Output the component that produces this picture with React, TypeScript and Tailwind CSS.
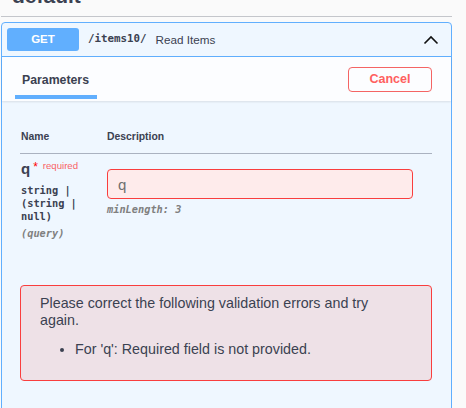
import React from 'react';

const sans = "font-['Liberation_Sans',Arial,sans-serif]";
const mono = "font-['DejaVu_Sans_Mono',monospace]";

export default function App() {
  return (
    <div className={`min-h-screen bg-[#fafafa] text-[#3b4151] ${sans}`}>
      <div className="ml-[1px] w-[451px]">
        {/* Tag heading, scrolled mostly out of view */}
        <div className="h-[17px] overflow-hidden border-b border-[#c4c6cb]">
          <h3 className="mt-[-16px] pl-[11px] text-[21px] font-bold leading-[24px]">default</h3>
        </div>

        {/* Operation block */}
        <div className="mt-[5px] min-h-[400px] rounded-[4px] border border-[#61affe] bg-[#eff7ff]">
          {/* Summary */}
          <div className="flex h-[34px] items-center border-b border-[#61affe] pl-[5px] pr-[12px]">
            <span className="flex h-[23px] w-[72px] items-center justify-center rounded-[3px] bg-[#61affe] text-[11.5px] font-bold text-white">
              GET
            </span>
            <span className={`ml-[9px] text-[10.8px] font-bold ${mono}`}>/items10/</span>
            <span className="ml-[9px] text-[11.7px]">Read Items</span>
            <svg className="ml-auto" width="16" height="10" viewBox="0 0 16 10" fill="none">
              <polyline points="1.5,8.5 8,2 14.5,8.5" stroke="#111" strokeWidth="1.6" />
            </svg>
          </div>

          {/* Section header */}
          <div className="flex h-[44px] items-center justify-between bg-white/80 pl-[13px] pr-[19px] shadow-[0_1px_2px_rgba(0,0,0,0.1)]">
            <div className="mb-[2px] flex w-[82px] items-center self-stretch border-b-[4px] border-[#61affe] pl-[7px] pt-[8px]">
              <span className="text-[12.3px] font-bold">Parameters</span>
            </div>
            <button className="h-[25px] w-[84px] rounded-[4px] border border-[#f46464] text-[12.5px] font-bold text-[#ff6060]">
              Cancel
            </button>
          </div>

          {/* Parameters table */}
          <div className="pl-[18px] pr-[19px]">
            <div className="flex border-b border-[#aab2c0] pb-[10px] pt-[29px] text-[10.4px] font-bold leading-[13px]">
              <div className="w-[87px] pl-[1px]">Name</div>
              <div>Description</div>
            </div>

            <div className="flex pt-[7px]">
              <div className="w-[87px] pl-[1px]">
                <div className="flex items-start leading-[16px]">
                  <span className="text-[15px] font-bold">q</span>
                  <span className="ml-[3px] mt-[-2px] text-[12px] text-[#ff0000]">*</span>
                  <span className="ml-[5px] mt-[-3px] text-[9.6px] text-[#f96366]">required</span>
                </div>
                <div className={`pt-[7px] text-[10.3px] font-semibold leading-[13px] ${mono}`}>
                  string | (string | null)
                </div>
                <div className={`mt-[4px] text-[10.3px] font-semibold italic leading-[13px] text-[#808080] ${mono}`}>
                  (query)
                </div>
              </div>
              <div className="pt-[8px]">
                <input
                  placeholder="q"
                  className="h-[30px] w-[306px] rounded-[4px] border border-[#f93e3e] bg-[#feebeb] px-[10px] text-[15px] text-[#3b4151] outline-none placeholder:text-[#707070]"
                />
                <div className={`mt-[4px] text-[10.3px] font-semibold italic leading-[13px] text-[#808080] ${mono}`}>
                  minLength: 3
                </div>
              </div>
            </div>

            {/* Validation errors */}
            <div className="mt-[45px] rounded-[4px] border border-[#f93e3e] bg-[#eee1e7] pb-[22px] pl-[19px] pt-[9px]">
              <p className="w-[350px] text-[14.3px] leading-[17px]">
                Please correct the following validation errors and try again.
              </p>
              <ul className="mt-[12px] list-disc pl-[35px] text-[14.3px] leading-[17px]">
                <li>For 'q': Required field is not provided.</li>
              </ul>
            </div>
          </div>
        </div>
      </div>
    </div>
  );
}
